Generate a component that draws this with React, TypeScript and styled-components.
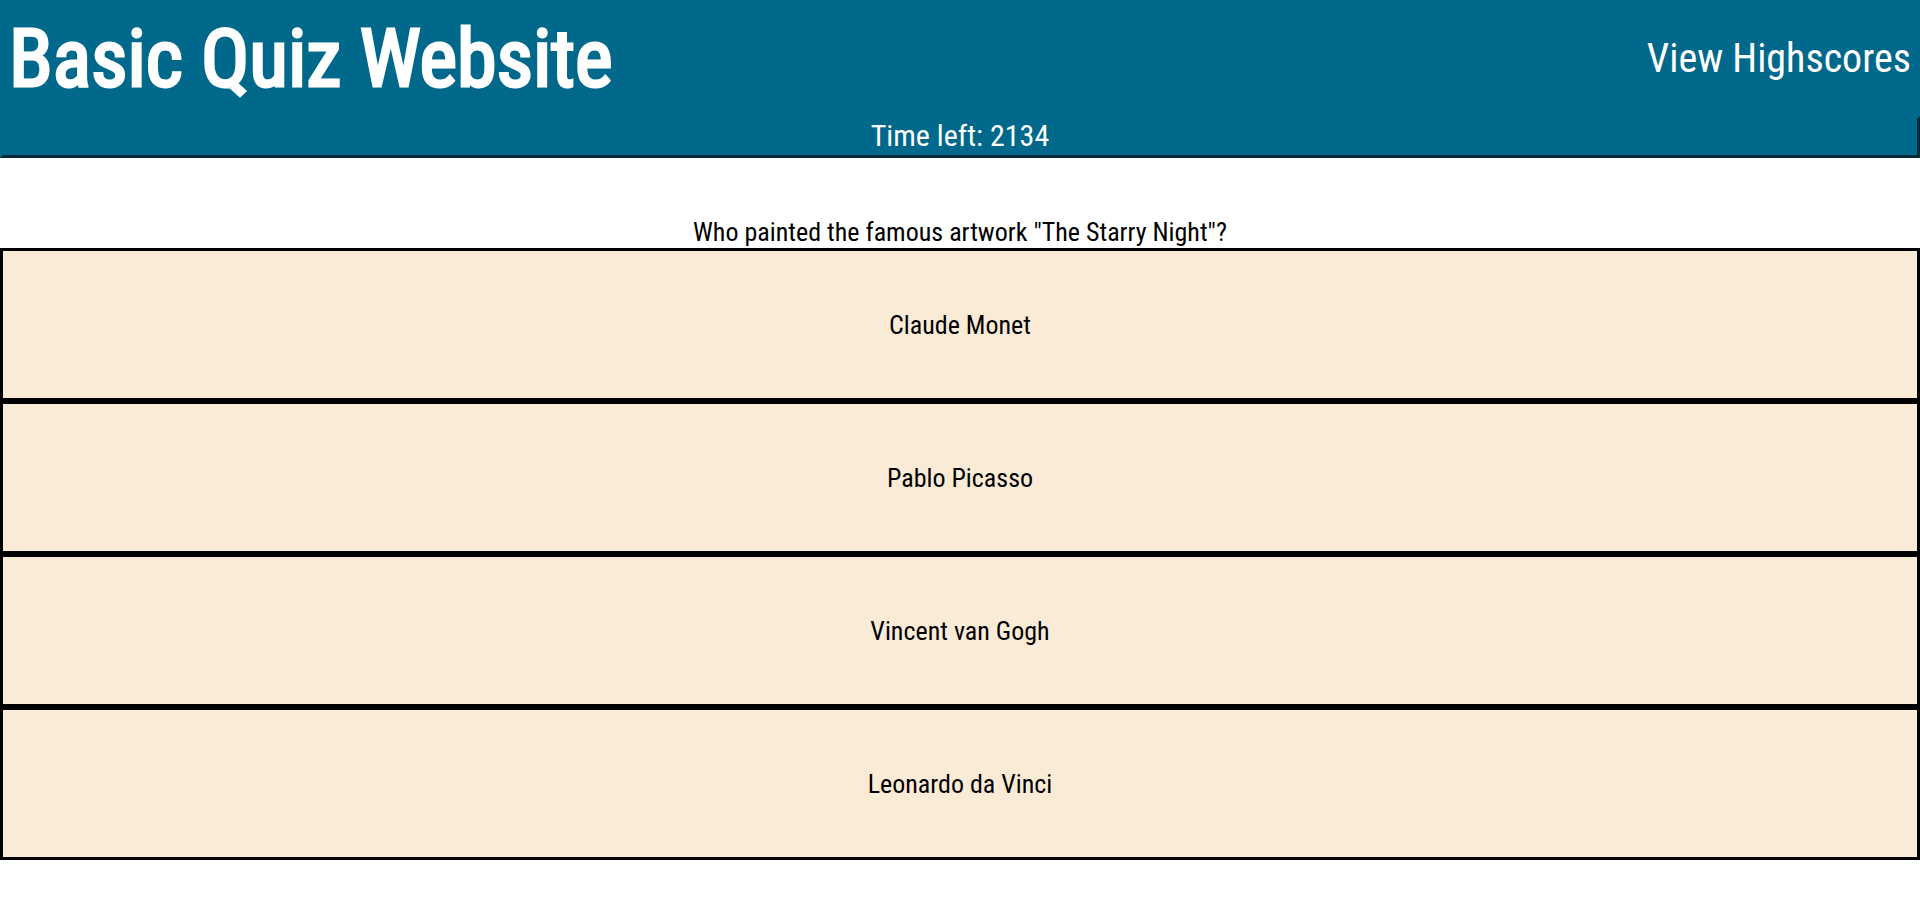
import React from "react";
import styled, { createGlobalStyle } from "styled-components";

const GlobalStyle = createGlobalStyle`
  * { box-sizing: border-box; }
  body {
    margin: 0;
    background: #ffffff;
    color: #000000;
    font-family: "Roboto Condensed", Roboto, "Liberation Sans", sans-serif;
    font-size: 26px;
    line-height: 31px;
  }
`;

const Header = styled.header`
  display: flex;
  justify-content: space-between;
  align-items: center;
  padding: 12px 9px 10px;
  background: #00688b;
  color: #ffffff;
`;

const Title = styled.h1`
  margin: 0;
  font-size: 80px;
  font-weight: 400;
  line-height: 94px;
  -webkit-text-stroke: 3px currentColor;
`;

const ScoresLink = styled.a`
  color: inherit;
  font-size: 40px;
  line-height: 48px;
  text-decoration: none;
`;

const Timer = styled.div`
  padding-bottom: 2px;
  border: 3px outset #00688b;
  background: #00688b;
  color: #ffffff;
  font-size: 30px;
  line-height: 34px;
  text-align: center;
`;

const Question = styled.p`
  margin: 0;
  padding: 59px 16px 0;
  text-align: center;
`;

const Answer = styled.button`
  display: block;
  width: 100%;
  padding: 59px 16px 57px;
  border: 3px solid #000000;
  background: #faebd7;
  color: #000000;
  font: inherit;
  text-align: center;
  cursor: pointer;
`;

const answers = ["Claude Monet", "Pablo Picasso", "Vincent van Gogh", "Leonardo da Vinci"];

export default function App() {
  return (
    <>
      <GlobalStyle />
      <Header>
        <Title>Basic Quiz Website</Title>
        <ScoresLink href="#highscores">View Highscores</ScoresLink>
      </Header>
      <Timer>Time left: 2134</Timer>
      <main>
        <Question>Who painted the famous artwork "The Starry Night"?</Question>
        {answers.map((answer) => (
          <Answer key={answer} type="button">{answer}</Answer>
        ))}
      </main>
    </>
  );
}
